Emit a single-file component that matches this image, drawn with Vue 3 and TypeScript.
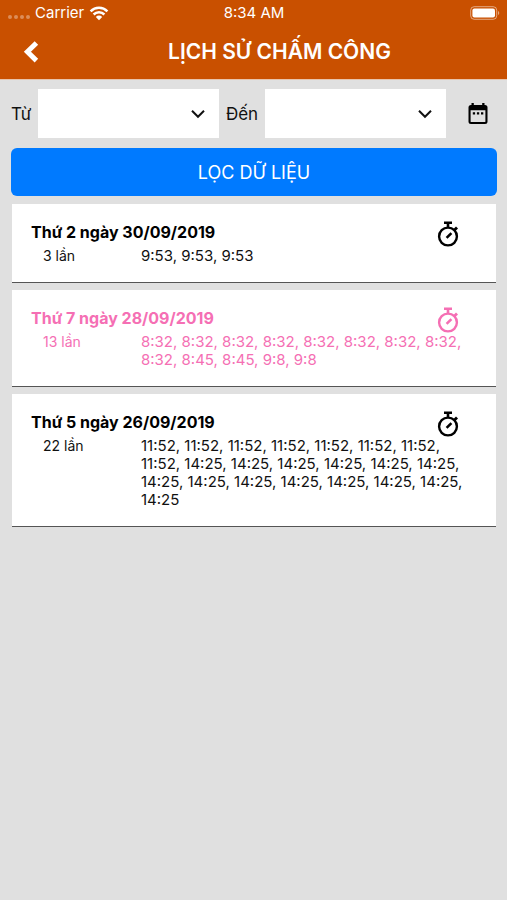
<script setup lang="ts">
import { computed, ref } from 'vue'

interface DayRecord {
  day: string
  date: string
  weekend: boolean
  times: string[]
}

const repeat = (time: string, count: number): string[] => Array<string>(count).fill(time)

const records: DayRecord[] = [
  { day: 'Thứ 2', date: '30/09/2019', weekend: false, times: repeat('9:53', 3) },
  {
    day: 'Thứ 7',
    date: '28/09/2019',
    weekend: true,
    times: [...repeat('8:32', 9), ...repeat('8:45', 2), ...repeat('9:8', 2)],
  },
  {
    day: 'Thứ 5',
    date: '26/09/2019',
    weekend: false,
    times: [...repeat('11:52', 8), ...repeat('14:25', 14)],
  },
]

const from = ref('')
const to = ref('')
const range = ref({ from: '', to: '' })

const sortable = (date: string): string => date.split('/').reverse().join('')

const visible = computed(() =>
  records.filter((r) => {
    const d = sortable(r.date)
    return (
      (!range.value.from || d >= sortable(range.value.from)) &&
      (!range.value.to || d <= sortable(range.value.to))
    )
  }),
)

function applyFilter(): void {
  range.value = { from: from.value, to: to.value }
}
</script>

<template>
  <div class="screen">
    <header class="top">
      <div class="status">
        <div class="carrier">
          <span class="signal"><i v-for="n in 4" :key="n"></i></span>
          <span>Carrier</span>
          <svg class="wifi" viewBox="0 0 20 15" aria-hidden="true">
            <path d="M1.6 5.3a12 12 0 0 1 16.8 0M4.6 8.5a7.7 7.7 0 0 1 10.8 0" fill="none" stroke="currentColor" stroke-width="2.5" />
            <path d="M6.8 10.9a4.6 4.6 0 0 1 6.4 0L10 14.2z" fill="currentColor" />
          </svg>
        </div>
        <span class="clock">8:34 AM</span>
        <svg class="battery" viewBox="0 0 30 14" aria-hidden="true">
          <rect x="0.7" y="0.7" width="26" height="12.6" rx="3.5" fill="none" stroke="#fff" stroke-opacity="0.5" />
          <rect x="2.4" y="2.4" width="22.6" height="9.2" rx="2" fill="#fff" />
          <path d="M28 5v4c1.7-.6 1.7-3.4 0-4z" fill="#fff" fill-opacity="0.5" />
        </svg>
      </div>
      <div class="nav">
        <button class="back" type="button" aria-label="Quay lại">
          <svg viewBox="0 0 16 22" aria-hidden="true">
            <path d="M13.4 2 4.4 10.8l9 8.8" fill="none" stroke="currentColor" stroke-width="5" />
          </svg>
        </button>
        <h1>LỊCH SỬ CHẤM CÔNG</h1>
      </div>
    </header>

    <main>
      <form @submit.prevent="applyFilter">
        <div class="range">
          <label for="from">Từ</label>
          <div class="picker">
            <select id="from" v-model="from">
              <option value=""></option>
              <option v-for="r in records" :key="r.date" :value="r.date">{{ r.date }}</option>
            </select>
            <svg viewBox="0 0 16 10" aria-hidden="true"><path d="m2 1.8 6 6 6-6" /></svg>
          </div>
          <label for="to">Đến</label>
          <div class="picker">
            <select id="to" v-model="to">
              <option value=""></option>
              <option v-for="r in records" :key="r.date" :value="r.date">{{ r.date }}</option>
            </select>
            <svg viewBox="0 0 16 10" aria-hidden="true"><path d="m2 1.8 6 6 6-6" /></svg>
          </div>
          <button class="calendar" type="button" aria-label="Lịch">
            <svg viewBox="0 0 20 22" aria-hidden="true">
              <path fill="currentColor" fill-rule="evenodd" d="M3.5 0h2.3v2h8.4V0h2.3v2H17a2.5 2.5 0 0 1 2.5 2.5v14A2.5 2.5 0 0 1 17 21H3a2.5 2.5 0 0 1-2.5-2.5v-14A2.5 2.5 0 0 1 3 2h.5zM2.6 7.2v11.2c0 .4.2.6.6.6h13.6c.4 0 .6-.2.6-.6V7.2z" />
              <path fill="currentColor" d="M4.8 9.2h2.3v2.3H4.8zM8.9 9.2h2.3v2.3H8.9zM13 9.2h2.3v2.3H13z" />
            </svg>
          </button>
        </div>
        <button class="submit" type="submit">LỌC DỮ LIỆU</button>
      </form>

      <ul class="list">
        <li v-for="r in visible" :key="r.date" class="card" :class="{ weekend: r.weekend }">
          <div class="card-head">
            <h2>{{ r.day }} ngày {{ r.date }}</h2>
            <svg class="watch" viewBox="0 0 22 26" aria-hidden="true">
              <g fill="none" stroke="currentColor">
                <circle cx="11" cy="15.5" r="8.9" stroke-width="2.4" />
                <path d="M7 1.8h8M11 2v5" stroke-width="2.6" />
                <path d="m17 9.5 3-3" stroke-width="2.8" />
                <path d="m9.6 16.9 4.8-4.8" stroke-width="2.6" />
              </g>
            </svg>
          </div>
          <div class="card-body">
            <span class="count">{{ r.times.length }} lần</span>
            <span class="times">{{ r.times.join(', ') }}</span>
          </div>
        </li>
      </ul>
    </main>
  </div>
</template>

<style>
body {
  background: #e0e0e0;
}
</style>

<style scoped>
.screen {
  min-height: 100vh;
  background: #e0e0e0;
  color: #111;
  font-family: Inter, 'Liberation Sans', sans-serif;
}

button {
  padding: 0;
  border: 0;
  background: none;
  color: inherit;
  font-family: inherit;
  cursor: pointer;
}

svg {
  display: block;
}

.top {
  background: #c95000;
  color: #fff;
  border-bottom: 1px solid #e8c4ac;
}

.status {
  display: grid;
  grid-template-columns: 1fr auto 1fr;
  align-items: center;
  height: 26px;
  padding: 0 7px 0 8px;
  font-size: 15px;
  line-height: 18px;
}

.carrier {
  display: flex;
  align-items: center;
  gap: 5px;
}

.signal {
  display: flex;
  gap: 2px;
  padding-top: 8px;
}

.signal i {
  width: 4px;
  height: 4px;
  border-radius: 50%;
  background: #fff;
  opacity: 0.35;
}

.wifi {
  width: 20px;
  height: 15px;
}

.battery {
  width: 30px;
  height: 14px;
  justify-self: end;
}

.nav {
  display: grid;
  grid-template-columns: 52px 1fr;
  align-items: center;
  height: 52px;
  padding-bottom: 1px;
}

.back {
  display: flex;
  justify-content: flex-end;
  padding-right: 13px;
}

.back svg {
  width: 16px;
  height: 22px;
}

h1 {
  margin: 0;
  text-align: center;
  font-size: 21px;
  font-weight: 600;
  line-height: 24px;
}

form {
  padding: 9px 10px 0 11px;
}

.range {
  display: flex;
  align-items: center;
  font-size: 17px;
}

.range label {
  flex: 0 0 27px;
}

.picker + label {
  flex-basis: 46px;
  text-align: center;
}

.picker {
  flex: 1;
  display: grid;
  align-items: center;
  background: #fff;
}

.picker > * {
  grid-area: 1 / 1;
}

.picker select {
  width: 100%;
  height: 49px;
  padding: 0 36px 0 12px;
  border: 0;
  border-radius: 0;
  background: transparent;
  color: inherit;
  font: inherit;
  appearance: none;
}

.picker svg {
  width: 16px;
  height: 10px;
  margin-right: 13px;
  justify-self: end;
  fill: none;
  stroke: #111;
  stroke-width: 2;
  pointer-events: none;
}

.calendar {
  flex: 0 0 51px;
  display: flex;
  justify-content: flex-end;
  padding-right: 9px;
  color: #000;
}

.calendar svg {
  width: 20px;
  height: 22px;
}

.submit {
  width: 100%;
  height: 48px;
  margin-top: 10px;
  border-radius: 6px;
  background: #007aff;
  color: #fff;
  font-size: 18px;
}

.list {
  display: flex;
  flex-direction: column;
  gap: 7px;
  margin: 0;
  padding: 8px 11px 8px 12px;
  list-style: none;
}

.card {
  padding: 17px 16px 17px 19px;
  background: #fff;
  border-bottom: 1px solid #555;
}

.card-head {
  display: flex;
  justify-content: space-between;
  align-items: flex-start;
  height: 26px;
  padding-right: 21px;
  color: #000;
}

.card.weekend,
.weekend .card-head {
  color: #f56fb4;
}

h2 {
  margin: 0;
  font-size: 16px;
  font-weight: 700;
  line-height: 22px;
}

.watch {
  width: 22px;
  height: 26px;
}

.card-body {
  display: grid;
  grid-template-columns: 98px 1fr;
  padding: 0 4px 0 12px;
  line-height: 18px;
}

.count {
  font-size: 14px;
}

.times {
  font-size: 15px;
}
</style>
